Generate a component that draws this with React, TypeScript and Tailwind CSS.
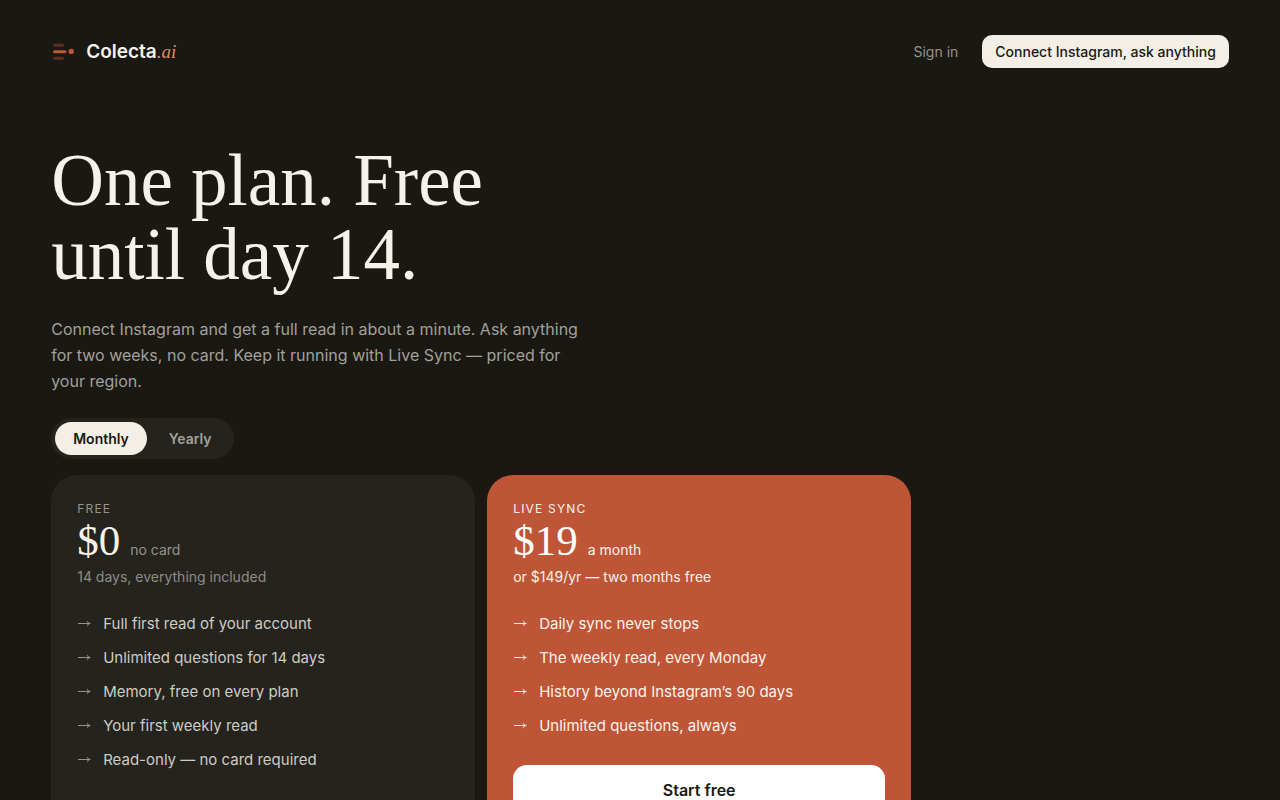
import React, { useState } from 'react';

type Billing = 'monthly' | 'yearly';

const freeFeatures = [
  'Full first read of your account',
  'Unlimited questions for 14 days',
  'Memory, free on every plan',
  'Your first weekly read',
  'Read-only — no card required',
];

const liveFeatures = [
  'Daily sync never stops',
  'The weekly read, every Monday',
  'History beyond Instagram’s 90 days',
  'Unlimited questions, always',
];

const Logo: React.FC = () => (
  <a href="#" className="flex items-center gap-3">
    <svg width="23" height="18" viewBox="0 0 23 18" aria-hidden="true">
      <rect x="2" y="0.8" width="11" height="3" rx="1.5" fill="#5c2f21" />
      <rect x="2" y="7.3" width="13.5" height="3" rx="1.5" fill="#c05636" />
      <rect x="2" y="13.8" width="11" height="3" rx="1.5" fill="#5c2f21" />
      <circle cx="20.2" cy="8.4" r="2.7" fill="#c05636" />
    </svg>
    <span className="text-[19px] leading-7 font-semibold">
      Colecta
      <span className="font-['Liberation_Serif',serif] text-[19px] font-normal italic text-[#e08a62]">.ai</span>
    </span>
  </a>
);

const FeatureList: React.FC<{ items: string[]; arrowClass: string }> = ({ items, arrowClass }) => (
  <ul className="mt-[26px] flex flex-col gap-3">
    {items.map(item => (
      <li key={item} className="flex items-center gap-3 text-[15px] leading-[22px]">
        <svg width="14" height="10" viewBox="0 0 14 10" aria-hidden="true" className={arrowClass}>
          <path d="M1 4.5H13" fill="none" stroke="currentColor" strokeWidth="1" />
          <path d="M10.2 1.8C10.8 3.4 11.9 4.1 13.8 4.5C11.9 4.9 10.8 5.6 10.2 7.2L11 4.5Z" fill="currentColor" stroke="currentColor" strokeWidth="0.4" />
        </svg>
        {item}
      </li>
    ))}
  </ul>
);

const App: React.FC = () => {
  const [billing, setBilling] = useState<Billing>('monthly');
  const yearly = billing === 'yearly';

  const tabClass = (active: boolean) =>
    active
      ? 'h-[33px] rounded-full px-[18px] bg-[#f3efe6] text-[#1a1813]'
      : 'h-[33px] rounded-full px-[18px] text-[#a3a099]';

  return (
    <div className="min-h-screen bg-[#1a1813] px-[4vw] pb-16 font-[Inter,sans-serif] text-[#f5f2ea]">
      {/* Header */}
      <header className="flex items-center justify-between pt-[35px]">
        <Logo />
        <nav className="flex items-center gap-6 text-sm">
          <a href="#" className="text-[#96938c]">Sign in</a>
          <button className="h-[33px] rounded-[10px] bg-[#f3efe6] px-[13px] font-medium text-[#1a1813]">
            Connect Instagram, ask anything
          </button>
        </nav>
      </header>

      <main className="pt-[76px]">
        <h1 className="max-w-[500px] font-['Liberation_Serif',serif] text-[73px] leading-[74px]">
          One plan. Free until day 14.
        </h1>
        <p className="mt-6 max-w-[540px] text-base leading-[26px] text-[#a3a099]">
          Connect Instagram and get a full read in about a minute. Ask anything for two weeks, no card. Keep it
          running with Live Sync — priced for your region.
        </p>

        {/* Billing toggle */}
        <div className="mt-6 inline-flex gap-1 rounded-full bg-[#24231e] p-1 text-sm font-semibold">
          <button aria-pressed={!yearly} onClick={() => setBilling('monthly')} className={tabClass(!yearly)}>
            Monthly
          </button>
          <button aria-pressed={yearly} onClick={() => setBilling('yearly')} className={tabClass(yearly)}>
            Yearly
          </button>
        </div>

        {/* Plans */}
        <div className="mt-4 grid max-w-[860px] gap-3 sm:grid-cols-2">
          <section className="rounded-[26px] bg-[#24231e] p-[26px] text-[#cfccc3]">
            <h2 className="text-xs leading-4 tracking-widest text-[#96938c]">FREE</h2>
            <div className="flex items-baseline gap-[10px]">
              <span className="font-['Liberation_Serif',serif] text-[43px] leading-[48px] text-[#f5f2ea]">$0</span>
              <span className="text-sm text-[#96938c]">no card</span>
            </div>
            <p className="mt-[2px] text-sm leading-5 text-[#8f8c85]">14 days, everything included</p>
            <FeatureList items={freeFeatures} arrowClass="text-[#96938c]" />
          </section>

          <section className="rounded-[26px] bg-[#bf5537] p-[26px] text-[#fdf3ea]">
            <h2 className="text-xs leading-4 tracking-widest">LIVE SYNC</h2>
            <div className="flex items-baseline gap-[10px]">
              <span className="font-['Liberation_Serif',serif] text-[43px] leading-[48px] text-white">
                {yearly ? '$149' : '$19'}
              </span>
              <span className="text-sm">{yearly ? 'a year' : 'a month'}</span>
            </div>
            <p className="mt-[2px] text-sm leading-5">
              {yearly ? 'or $19 a month' : 'or $149/yr — two months free'}
            </p>
            <FeatureList items={liveFeatures} arrowClass="text-[#fbe6da]" />
            <button className="mt-7 h-[50px] w-full rounded-[14px] bg-white text-base font-semibold text-[#1a1813]">
              Start free
            </button>
          </section>
        </div>
      </main>
    </div>
  );
};

export default App;
